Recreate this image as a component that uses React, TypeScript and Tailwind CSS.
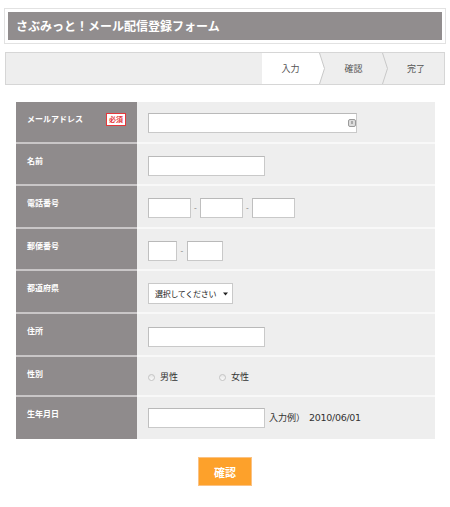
import React from "react";

const Input = ({ w }: { w: string }) => (
  <input
    type="text"
    className={`block ${w} h-[20px] border border-[#c9c9c9] border-t-[#b9b9b9] border-l-[#bfbfbf] bg-white outline-none`}
  />
);

const Dash = ({ w }: { w: string }) => (
  <span className={`${w} text-center text-[8px] leading-[20px] text-[#777]`}>-</span>
);

const Radio = () => (
  <span className="inline-block w-[7px] h-[7px] rounded-full border border-[#c4c4c4] bg-gradient-to-b from-[#e6e6e6] to-[#fafafa]" />
);

type Row = {
  label: string;
  h: string;
  pt: string;
  req?: boolean;
  content: React.ReactNode;
  last?: boolean;
};

export default function App() {
  const rows: Row[] = [
    {
      label: "メールアドレス",
      h: "h-[42px]",
      pt: "pt-[11px]",
      req: true,
      content: (
        <div className="relative w-[209px]">
          <Input w="w-[209px]" />
          <svg
            className="absolute left-[200px] top-[6px]"
            width="8"
            height="8"
            viewBox="0 0 8 8"
          >
            <rect x="0.5" y="0.5" width="7" height="7" rx="1.5" fill="#dcdcdc" stroke="#9a9a9a" />
            <rect x="3.5" y="2" width="1" height="3" fill="#777" />
          </svg>
        </div>
      ),
    },
    {
      label: "名前",
      h: "h-[42px]",
      pt: "pt-[12px]",
      content: <Input w="w-[117px]" />,
    },
    {
      label: "電話番号",
      h: "h-[43px]",
      pt: "pt-[12px]",
      content: (
        <div className="flex">
          <Input w="w-[43px]" />
          <Dash w="w-[9px]" />
          <Input w="w-[43px]" />
          <Dash w="w-[9px]" />
          <Input w="w-[43px]" />
        </div>
      ),
    },
    {
      label: "郵便番号",
      h: "h-[42px]",
      pt: "pt-[12px]",
      content: (
        <div className="flex">
          <Input w="w-[29px]" />
          <Dash w="w-[10px]" />
          <Input w="w-[36px]" />
        </div>
      ),
    },
    {
      label: "都道府県",
      h: "h-[43px]",
      pt: "pt-[12px]",
      content: (
        <div className="w-[85px] h-[21px] border border-[#c9c9c9] bg-white flex items-center pl-[6px] pr-[4px] justify-between">
          <span className="text-[8px] leading-[12px] text-[#222] tracking-[-0.3px]">選択してください</span>
          <svg width="5" height="4" viewBox="0 0 5 4">
            <path d="M0 0.5 L5 0.5 L2.5 3.5 Z" fill="#222" />
          </svg>
        </div>
      ),
    },
    {
      label: "住所",
      h: "h-[43px]",
      pt: "pt-[13px]",
      content: <Input w="w-[117px]" />,
    },
    {
      label: "性別",
      h: "h-[40px]",
      pt: "pt-[14px]",
      content: (
        <div className="flex items-center h-[12px] text-[9px] leading-[12px] text-[#333]">
          <Radio />
          <span className="ml-[5px]">男性</span>
          <span className="ml-[41px] flex items-center">
            <Radio />
          </span>
          <span className="ml-[5px]">女性</span>
        </div>
      ),
    },
    {
      label: "生年月日",
      h: "h-[42px]",
      pt: "pt-[11px]",
      last: true,
      content: (
        <div className="flex items-center">
          <Input w="w-[117px]" />
          <span className="ml-[4px] text-[9px] leading-[12px] text-[#333]">入力例）</span>
          <span className="ml-[4px] text-[9.5px] leading-[12px] text-[#333] font-['DejaVu_Sans',sans-serif] tracking-[-0.3px]">
            2010/06/01
          </span>
        </div>
      ),
    },
  ];

  return (
    <div className="w-[450px] h-[507px] bg-white font-['Noto_Sans_CJK_JP',sans-serif] overflow-hidden">
      <div className="pt-[8px] px-[4px]">
        <div className="border border-[#e2e2e2] p-[3px]">
          <div className="h-[28px] bg-[#918d8e] flex items-center pl-[8px]">
            <span className="text-white font-bold text-[12px] leading-[16px]">
              さぶみっと！メール配信登録フォーム
            </span>
          </div>
        </div>
      </div>

      <div className="mx-[5px] mt-[8px] h-[33px] border border-[#d6d6d6] bg-[#eeeeee] flex justify-end text-[9px] leading-[12px] text-[#555]">
        <div className="flex h-full">
          <div className="w-[57px] bg-white flex items-center justify-center">入力</div>
          <svg width="6" height="31" viewBox="0 0 6 31" className="block">
            <path d="M0 0 L0.5 0 L5.5 15.5 L0.5 31 L0 31 Z" fill="#ffffff" />
            <path d="M0.5 0 L5.5 15.5 L0.5 31" fill="none" stroke="#c8c8c8" strokeWidth="1" />
          </svg>
          <div className="w-[57px] flex items-center justify-center">確認</div>
          <svg width="6" height="31" viewBox="0 0 6 31" className="block">
            <path d="M0.5 0 L5.5 15.5 L0.5 31" fill="none" stroke="#c8c8c8" strokeWidth="1" />
          </svg>
          <div className="w-[56px] flex items-center justify-center">完了</div>
        </div>
      </div>

      <div className="ml-[16px] mt-[17px] w-[419px]">
        {rows.map((r, i) => (
          <div key={i} className={`flex ${r.h}`}>
            <div
              className={`w-[121px] bg-[#8f8b8c] flex items-start justify-between pl-[11px] pr-[11px] pt-[11px] ${
                r.last ? "" : "border-b-2 border-[#c9c6c7]"
              }`}
            >
              <span className="text-white font-bold text-[8px] leading-[12px]">{r.label}</span>
              {r.req && (
                <span className="w-[20px] h-[13px] border border-[#e4393c] bg-white text-[#e4393c] text-[7px] leading-[11px] font-bold flex items-center justify-center">
                  必須
                </span>
              )}
            </div>
            <div
              className={`flex-1 bg-[#eeeeee] pl-[11px] ${r.pt} ${
                r.last ? "" : "border-b-2 border-[#f8f8f8]"
              }`}
            >
              {r.content}
            </div>
          </div>
        ))}
      </div>

      <div className="flex justify-center mt-[18px]">
        <div className="w-[54px] h-[29px] bg-[#fda12b] border border-[#fbc283] flex items-center justify-center text-white font-bold text-[11px] leading-[14px]">
          確認
        </div>
      </div>
    </div>
  );
}
